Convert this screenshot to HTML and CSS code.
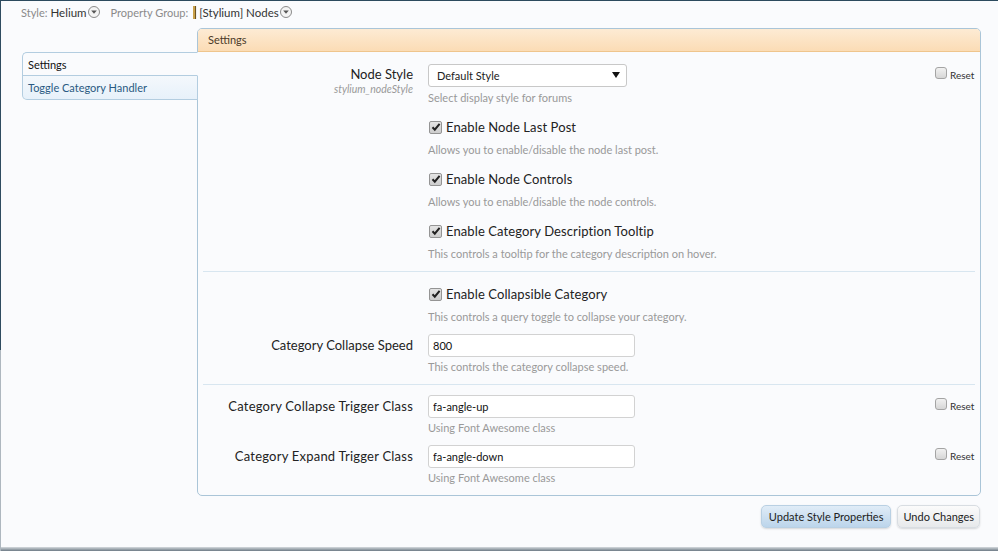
FILE: index.html
```html
<!DOCTYPE html>
<html lang="en">
<head>
    <meta charset="UTF-8">
    <title>Style Properties: [Stylium] Nodes</title>
    <link rel="stylesheet" href="styles.css">
</head>
<body>
    <div class="topbar">
        <span class="crumb-label">Style:</span>
        <span class="crumb-value">Helium</span>
        <svg class="drop" viewBox="0 0 12 12" width="12" height="12"><circle cx="6" cy="6" r="5.5" fill="#f4f4f4" stroke="#8a8a8a"/><path d="M3.2 4.6h5.6L6 7.8z" fill="#555"/></svg>
        <span class="crumb-label gap">Property Group:</span>
        <span class="group-icon"></span>
        <span class="crumb-value">[Stylium] Nodes</span>
        <svg class="drop" viewBox="0 0 12 12" width="12" height="12"><circle cx="6" cy="6" r="5.5" fill="#f4f4f4" stroke="#8a8a8a"/><path d="M3.2 4.6h5.6L6 7.8z" fill="#555"/></svg>
    </div>

    <div class="layout">
        <ul class="tabs">
            <li class="tab active">Settings</li>
            <li class="tab">Toggle Category Handler</li>
        </ul>

        <div class="main">
            <div class="panel">
                <h3 class="panel-head">Settings</h3>

                <div class="section">
                    <div class="row select-row">
                        <div class="label">
                            <div class="label-text">Node Style</div>
                            <div class="label-key">stylium_nodeStyle</div>
                        </div>
                        <div class="field">
                            <div class="select">
                                <span>Default Style</span>
                                <svg class="caret" viewBox="0 0 8 6" width="8" height="6"><path d="M0 0h8L4 6z" fill="#111"/></svg>
                            </div>
                            <p class="hint hint-select">Select display style for forums</p>
                        </div>
                        <label class="reset"><span class="box"></span><span class="reset-text">Reset</span></label>
                    </div>

                    <div class="row cb-row">
                        <div class="label"></div>
                        <div class="field">
                            <div class="check"><span class="box checked"><svg viewBox="0 0 10 10" width="10" height="10"><path d="M1.5 5.2l2.3 2.5L8.6 1.8" fill="none" stroke="#222" stroke-width="2"/></svg></span>Enable Node Last Post</div>
                            <p class="hint hint-cb">Allows you to enable/disable the node last post.</p>
                        </div>
                    </div>

                    <div class="row cb-row">
                        <div class="label"></div>
                        <div class="field">
                            <div class="check"><span class="box checked"><svg viewBox="0 0 10 10" width="10" height="10"><path d="M1.5 5.2l2.3 2.5L8.6 1.8" fill="none" stroke="#222" stroke-width="2"/></svg></span>Enable Node Controls</div>
                            <p class="hint hint-cb">Allows you to enable/disable the node controls.</p>
                        </div>
                    </div>

                    <div class="row cb-row">
                        <div class="label"></div>
                        <div class="field">
                            <div class="check"><span class="box checked"><svg viewBox="0 0 10 10" width="10" height="10"><path d="M1.5 5.2l2.3 2.5L8.6 1.8" fill="none" stroke="#222" stroke-width="2"/></svg></span>Enable Category Description Tooltip</div>
                            <p class="hint hint-cb">This controls a tooltip for the category description on hover.</p>
                        </div>
                    </div>
                </div>

                <div class="section">
                    <div class="row cb-row">
                        <div class="label"></div>
                        <div class="field">
                            <div class="check"><span class="box checked"><svg viewBox="0 0 10 10" width="10" height="10"><path d="M1.5 5.2l2.3 2.5L8.6 1.8" fill="none" stroke="#222" stroke-width="2"/></svg></span>Enable Collapsible Category</div>
                            <p class="hint hint-cb">This controls a query toggle to collapse your category.</p>
                        </div>
                    </div>

                    <div class="row input-row">
                        <div class="label"><div class="label-text tall">Category Collapse Speed</div></div>
                        <div class="field">
                            <input class="text" type="text" value="800">
                            <p class="hint">This controls the category collapse speed.</p>
                        </div>
                    </div>
                </div>

                <div class="section last">
                    <div class="row input-row">
                        <div class="label"><div class="label-text tall wide">Category Collapse Trigger Class</div></div>
                        <div class="field">
                            <input class="text" type="text" value="fa-angle-up">
                            <p class="hint">Using Font Awesome class</p>
                        </div>
                        <label class="reset"><span class="box"></span><span class="reset-text">Reset</span></label>
                    </div>

                    <div class="row input-row">
                        <div class="label"><div class="label-text tall wide">Category Expand Trigger Class</div></div>
                        <div class="field">
                            <input class="text" type="text" value="fa-angle-down">
                            <p class="hint">Using Font Awesome class</p>
                        </div>
                        <label class="reset"><span class="box"></span><span class="reset-text">Reset</span></label>
                    </div>
                </div>
            </div>

            <div class="actions">
                <button class="button primary">Update Style Properties</button>
                <button class="button">Undo Changes</button>
            </div>
        </div>
    </div>
</body>
</html>
```

FILE: styles.css
```css
* {
    margin: 0;
    padding: 0;
    box-sizing: border-box;
}

body {
    font-family: 'Lato', 'Liberation Sans', sans-serif;
    color: #222;
    height: 551px;
    overflow: hidden;
    border-top: 1px solid #2c4a5e;
    background:
        linear-gradient(#2f4c60, #2f4c60) 0 0 / 1px 350px no-repeat,
        linear-gradient(#aeb7bf, #aeb7bf) 0 350px / 1px 100% no-repeat,
        linear-gradient(#d5dade, #6d7a85) 0 100% / 100% 4px no-repeat,
        #fafbfd;
}

/* breadcrumb */
.topbar {
    padding: 2px 0 0 21px;
    display: flex;
    align-items: center;
    height: 20px;
    font-size: 11px;
    margin-bottom: 7px;
}
.crumb-label {
    color: #8a8a8a;
    margin-right: 3px;
}
.crumb-label.gap {
    margin-left: 11px;
}
.crumb-value {
    color: #333;
    font-size: 11.5px;
}
.drop {
    margin-left: 1px;
}
.group-icon {
    width: 4px;
    height: 13px;
    margin: 0 2px;
    background: linear-gradient(to right, #c9a14a 0, #c9a14a 2px, #6b5322 2px, #6b5322 3px, #eee 3px);
}

.layout {
    display: flex;
    align-items: flex-start;
}

/* tabs */
.tabs {
    list-style: none;
    width: 176px;
    margin: 24px -1px 0 22px;
    position: relative;
    z-index: 1;
}
.tab {
    height: 24px;
    line-height: 23px;
    padding-left: 5px;
    font-size: 11px;
    color: #2a5a82;
    border: 1px solid #b3cde0;
    border-top: none;
    background: linear-gradient(#f4f8fc, #e7f1fa);
}
.tab.active {
    color: #111;
    background: #fafbfd;
    border-top: 1px solid #b3cde0;
    border-right-color: #fafbfd;
    border-radius: 5px 0 0 0;
}
.tab:last-child {
    border-radius: 0 0 0 5px;
}

/* panel */
.main {
    width: 784px;
}
.panel {
    border: 1px solid #aac5d8;
    border-radius: 5px;
    background: #fafbfd;
}
.panel-head {
    height: 23px;
    line-height: 22px;
    padding-left: 10px;
    font-size: 11px;
    font-weight: normal;
    color: #4b3a28;
    background: linear-gradient(#fdebd4, #fbdcb5);
    border-bottom: 1px solid #efc58d;
    border-radius: 4px 4px 0 0;
}

.section {
    margin: 0 5px;
    padding-bottom: 10px;
    border-bottom: 1px solid #d8e6f0;
}
.section.last {
    border-bottom: none;
}

.row {
    display: grid;
    grid-template-columns: 210px 1fr 40px;
    column-gap: 15px;
    align-items: start;
}
.select-row {
    margin-top: 12px;
}
.cb-row {
    margin-top: 13px;
}
.input-row {
    margin-top: 10px;
}

.label {
    text-align: right;
}
.label-text {
    font-size: 13px;
    line-height: 20px;
    color: #222;
}
.label-text.tall {
    line-height: 23px;
}
.label-text.wide {
    letter-spacing: 0.22px;
}
.label-key {
    font-size: 10.5px;
    line-height: 10px;
    font-style: italic;
    color: #999;
}

.select {
    position: relative;
    width: 199px;
    height: 23px;
    border: 1px solid #c8c8c8;
    border-radius: 3px;
    background: #fff;
    font-size: 11px;
    line-height: 21px;
    padding-left: 8px;
}
.caret {
    position: absolute;
    right: 6px;
    top: 7px;
}

.text {
    display: block;
    width: 207px;
    height: 23px;
    border: 1px solid #d2d2d2;
    border-radius: 3px;
    background: #fff;
    font-family: inherit;
    font-size: 11px;
    color: #111;
    padding-left: 4px;
    outline: none;
}

.check {
    display: flex;
    align-items: center;
    font-size: 13px;
    line-height: 18px;
    color: #222;
    letter-spacing: 0.1px;
}
.box {
    width: 13px;
    height: 13px;
    margin: 0 4px 0 1px;
    border: 1px solid #949494;
    border-radius: 2px;
    background: linear-gradient(#f1f1f1, #d6d6d6);
    display: inline-flex;
    align-items: center;
    justify-content: center;
    flex-shrink: 0;
}
.box.checked {
    background: linear-gradient(#e4e4e4, #cdcdcd);
}

.hint {
    font-size: 11px;
    line-height: 14px;
    color: #999;
    margin-top: 3px;
}
.hint-select {
    margin-top: 4px;
}
.hint-cb {
    margin-top: 7px;
}

.reset {
    display: flex;
    align-items: flex-start;
    margin-top: 3px;
    font-size: 10px;
    color: #333;
}
.reset-text {
    line-height: 10px;
    margin-top: 3px;
}
.reset .box {
    margin: 0 3px 0 0;
    width: 12px;
    height: 12px;
    border-color: #a4a4a4;
    border-radius: 3px;
}

/* buttons */
.actions {
    display: flex;
    justify-content: flex-end;
    gap: 6px;
    margin-top: 9px;
    padding-right: 1px;
}
.button {
    height: 23px;
    padding: 0 5px;
    font-family: inherit;
    font-size: 11px;
    color: #222;
    border: 1px solid #d8dde2;
    border-radius: 5px;
    background: linear-gradient(#fbfbfb, #e7e9eb);
    box-shadow: 0 1px 2px rgba(0, 0, 0, 0.15);
}
.button.primary {
    padding: 0 7px;
    border-color: #b9d0e3;
    background: linear-gradient(#e0ecf7, #bcd5eb);
}
```
